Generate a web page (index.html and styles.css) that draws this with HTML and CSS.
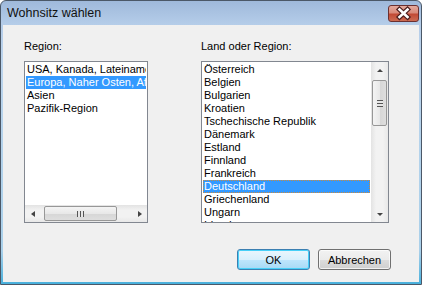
FILE: index.html
```html
<!DOCTYPE html>
<html lang="de">
<head>
  <meta charset="UTF-8">
  <title>Wohnsitz wählen</title>
  <link rel="stylesheet" href="styles.css">
</head>
<body>
  <div class="window">
    <div class="titlebar">
      <span class="title">Wohnsitz wählen</span>
      <button class="close" aria-label="Schließen">
        <svg width="31" height="17" viewBox="0 0 31 17">
          <path d="M11.5 4.5 L19.5 12 M19.5 4.5 L11.5 12" stroke="#4a1c1c" stroke-width="5" stroke-linecap="square"/>
          <path d="M11.5 4.5 L19.5 12 M19.5 4.5 L11.5 12" stroke="#fff" stroke-width="2.6" stroke-linecap="square"/>
        </svg>
      </button>
    </div>

    <div class="client">
      <div class="columns">
        <div class="field">
          <label class="caption">Region:</label>
          <div class="listbox listbox-region">
            <ul class="items">
              <li>USA, Kanada, Lateinamerika</li>
              <li class="selected">Europa, Naher Osten, Afrika</li>
              <li>Asien</li>
              <li>Pazifik-Region</li>
            </ul>
            <div class="hscroll">
              <span class="arrow arrow-left"></span>
              <div class="htrack">
                <div class="thumb hthumb"><span class="grip grip-v"></span></div>
              </div>
              <span class="arrow arrow-right"></span>
            </div>
          </div>
        </div>

        <div class="field">
          <label class="caption">Land oder Region:</label>
          <div class="listbox listbox-country">
            <ul class="items">
              <li>Österreich</li>
              <li>Belgien</li>
              <li>Bulgarien</li>
              <li>Kroatien</li>
              <li>Tschechische Republik</li>
              <li>Dänemark</li>
              <li>Estland</li>
              <li>Finnland</li>
              <li>Frankreich</li>
              <li class="selected focused">Deutschland</li>
              <li>Griechenland</li>
              <li>Ungarn</li>
              <li>Irland</li>
            </ul>
            <div class="vscroll">
              <span class="arrow arrow-up"></span>
              <div class="vtrack">
                <div class="thumb vthumb"><span class="grip grip-h"></span></div>
              </div>
              <span class="arrow arrow-down"></span>
            </div>
          </div>
        </div>
      </div>

      <div class="buttons">
        <button class="btn btn-default">OK</button>
        <button class="btn">Abbrechen</button>
      </div>
    </div>
  </div>
</body>
</html>
```

FILE: styles.css
```css
* {
  box-sizing: border-box;
  margin: 0;
  padding: 0;
}
body {
  font-family: 'Liberation Sans', Arial, sans-serif;
  font-size: 11px;
  color: #000;
  background: #fff;
}
.window {
  width: 422px;
  height: 285px;
  border: 1px solid #4b5868;
  border-radius: 6px 6px 0 0;
  padding: 0 2px 2px 2px;
  background: linear-gradient(to bottom, #9fb9db 0, #b5cde9 24px, #bcd4ec 60px, #a9d0ea 250px, #48b0dc 100%);
  display: flex;
  flex-direction: column;
}
.titlebar {
  height: 24px;
  display: flex;
  align-items: flex-start;
}
.title {
  font-size: 12.5px;
  line-height: 24px;
  padding-left: 4px;
  color: #111;
}
.close {
  margin: 4px 0 0 auto;
  width: 31px;
  height: 17px;
  border: 1px solid #6b3030;
  border-radius: 3px;
  background: linear-gradient(to bottom, #e4a99c 0, #d98a7a 45%, #c24a35 55%, #cc6b52 100%);
  display: flex;
  align-items: center;
  justify-content: center;
  padding: 0;
}
.close svg {
  display: block;
  margin: -1px;
}
.client {
  flex: 1;
  background: #f0f0f0;
  display: flex;
  flex-direction: column;
  padding: 15px 28px 0 21px;
}
.columns {
  display: flex;
  gap: 53px;
}
.caption {
  display: block;
  line-height: 13px;
  margin-bottom: 8px;
}
.listbox {
  height: 162px;
  border: 1px solid #828790;
  background: #fff;
  position: relative;
  overflow: hidden;
}
.listbox-region {
  width: 124px;
}
.listbox-country {
  width: 188px;
}
.items {
  list-style: none;
  padding: 1px;
}
.items li {
  height: 13px;
  line-height: 13px;
  padding-left: 1px;
  white-space: nowrap;
  overflow: hidden;
}
.listbox-country .items {
  margin-right: 17px;
}
.items li.selected {
  background: #3399ff;
  color: #fff;
}
.items li.focused {
  outline: 1px dotted #cc8a3c;
  outline-offset: -1px;
}

/* scrollbars */
.hscroll {
  position: absolute;
  left: 0;
  right: 0;
  bottom: 0;
  height: 17px;
  display: flex;
  align-items: center;
  background: linear-gradient(to bottom, #e3e3e3 0, #f2f2f2 30%, #f2f2f2 70%, #e8e8e8 100%);
}
.vscroll {
  position: absolute;
  top: 0;
  right: 0;
  bottom: 0;
  width: 17px;
  display: flex;
  flex-direction: column;
  align-items: center;
  background: linear-gradient(to right, #e3e3e3 0, #f2f2f2 30%, #f2f2f2 70%, #e8e8e8 100%);
}
.htrack {
  flex: 1;
  height: 15px;
  padding-left: 2px;
}
.vtrack {
  flex: 1;
  width: 15px;
  padding-top: 1px;
}
.thumb {
  border: 1px solid #979797;
  border-radius: 2px;
  display: flex;
  align-items: center;
  justify-content: center;
}
.hthumb {
  width: 73px;
  height: 15px;
  background: linear-gradient(to bottom, #f4f4f4 0, #e8e8e8 50%, #d6d6d6 51%, #dedede 100%);
}
.vthumb {
  width: 15px;
  height: 46px;
  background: linear-gradient(to right, #f4f4f4 0, #e8e8e8 50%, #d6d6d6 51%, #dedede 100%);
}
.grip-v {
  width: 7px;
  height: 6px;
  background: repeating-linear-gradient(to right, #555 0 1px, #e6e6e6 1px 3px);
}
.grip-h {
  width: 6px;
  height: 7px;
  background: repeating-linear-gradient(to bottom, #555 0 1px, #e6e6e6 1px 3px);
}
.arrow {
  width: 17px;
  height: 17px;
  flex: none;
  position: relative;
}
.arrow::after {
  content: "";
  position: absolute;
  left: 50%;
  top: 50%;
  width: 0;
  height: 0;
  border: 3px solid transparent;
}
.arrow-left::after {
  border-right: 4px solid #444;
  border-left: 0;
  margin: -3px 0 0 -3px;
}
.arrow-right::after {
  border-left: 4px solid #444;
  border-right: 0;
  margin: -3px 0 0 -1px;
}
.arrow-up::after {
  border-bottom: 3px solid #444;
  border-top: 0;
  margin: -2px 0 0 -3px;
}
.arrow-down::after {
  border-top: 3px solid #444;
  border-bottom: 0;
  margin: -1px 0 0 -3px;
}

/* buttons */
.buttons {
  display: flex;
  justify-content: flex-end;
  gap: 8px;
  margin-top: 26px;
}
.btn {
  width: 73px;
  height: 21px;
  font-family: 'Liberation Sans', Arial, sans-serif;
  font-size: 11px;
  color: #000;
  border: 1px solid #707070;
  border-radius: 3px;
  background: linear-gradient(to bottom, #f2f2f2 0, #ebebeb 50%, #dddddd 51%, #cfcfcf 100%);
  box-shadow: inset 0 0 0 1px rgba(255, 255, 255, 0.7);
}
.btn-default {
  border-color: #3c7fb1;
  background: linear-gradient(to bottom, #eaf6fd 0, #d9f0fc 50%, #bee6fd 51%, #a7d9f5 100%);
  box-shadow: inset 0 0 0 1px #48d0f8;
}
```
